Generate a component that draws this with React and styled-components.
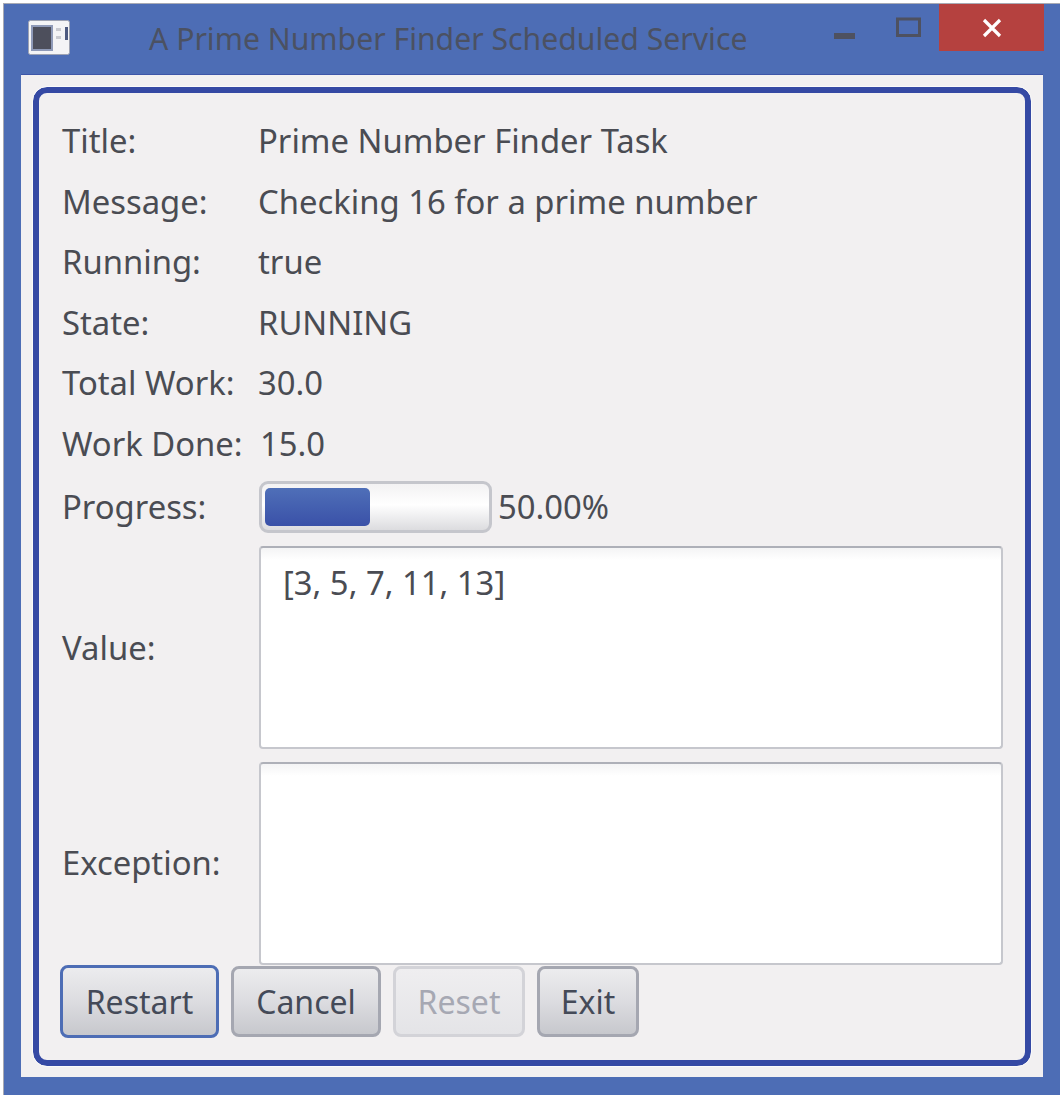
import { Fragment } from "react";
import styled, { createGlobalStyle } from "styled-components";

const GlobalStyle = createGlobalStyle`
  html, body {
    margin: 0;
    padding: 0;
    background: #fff;
  }
  body {
    font-family: "Noto Sans", "Open Sans", sans-serif;
  }
`;

const Page = styled.div`
  width: 1064px;
  height: 1099px;
  padding: 3px 4px 4px 3px;
  box-sizing: border-box;
`;

const Window = styled.div`
  height: 100%;
  box-sizing: border-box;
  display: flex;
  flex-direction: column;
  background: #4d6db5;
  border-top: 1px solid #a8aab4;
  border-left: 1px solid #a8aab4;
  padding: 0 17px 18px 17px;
`;

const TitleBar = styled.div`
  height: 71px;
  flex: none;
  display: flex;
  align-items: flex-start;
`;

const AppIcon = styled.svg`
  flex: none;
  margin: 16px 0 0 7px;
`;

const WindowTitle = styled.div`
  margin: 10px 0 0 78px;
  font-size: 30.2px;
  line-height: 50px;
  color: #4b5162;
  white-space: nowrap;
`;

const Controls = styled.div`
  margin-left: auto;
  margin-right: -1px;
  display: flex;
  align-items: flex-start;
`;

const ControlIcon = styled.svg`
  flex: none;
  margin-top: ${(p) => p.$top}px;
  margin-right: ${(p) => p.$right}px;
`;

const CloseButton = styled.div`
  width: 105px;
  height: 47px;
  background: #b5413f;
  display: flex;
  align-items: center;
  justify-content: center;
`;

const Sheet = styled.div`
  flex: 1;
  box-sizing: border-box;
  background: #f2f0f1;
  box-shadow: 0 -1px 0 #3d56a8;
  padding: 12px 12px 11px 12px;
  display: flex;
`;

const Panel = styled.div`
  flex: 1;
  box-sizing: border-box;
  border: 6px solid #3549a4;
  border-radius: 14px;
  outline: 1px solid #fafafa;
  padding: 24px 22px 0 21px;
  color: #4a4c53;
`;

const Form = styled.div`
  display: grid;
  grid-template-columns: 196px 1fr;
  row-gap: 13px;
  padding-left: 3px;
  align-items: center;
`;

const Label = styled.div`
  font-size: 32.8px;
  line-height: 47.6px;
  white-space: nowrap;
  margin-left: -1px;
  padding-top: ${(p) => p.$drop || 0}px;
`;

const Value = styled(Label)`
  margin-left: ${(p) => p.$shift || -1}px;
`;

const ProgressRow = styled.div`
  display: flex;
  align-items: center;
  gap: 7px;
  height: 52px;
`;

const ProgressTrack = styled.div`
  width: 233px;
  height: 52px;
  box-sizing: border-box;
  border: 3px solid #c5c6cc;
  border-radius: 9px;
  padding: 4px 15px 4px 3px;
  background: linear-gradient(#f3f2f3, #fff 45%, #dcdcdf);
`;

const ProgressFill = styled.div`
  height: 100%;
  border-radius: 5px;
  background: linear-gradient(#4f6fb8, #3a51a8);
`;

const TextBox = styled.div`
  height: 203px;
  box-sizing: border-box;
  border: 2px solid #c6c7cd;
  border-top-color: #aeb0b8;
  border-radius: 4px;
  padding: 13px 22px;
  font-size: 32.8px;
  line-height: 44px;
  background: linear-gradient(#f4f4f5, #fff 12px);
`;

const ButtonRow = styled.div`
  display: flex;
  align-items: center;
  gap: 12px;
`;

const Button = styled.div`
  width: ${(p) => p.$width}px;
  height: ${(p) => (p.$focused ? 73 : 71)}px;
  box-sizing: border-box;
  display: flex;
  align-items: center;
  justify-content: center;
  font-size: 32px;
  border-radius: 8px;
  border: ${(p) => (p.$focused ? "3px solid #4d6db5" : "3px solid #a5a7b1")};
  color: #444a58;
  background: linear-gradient(#ececee, #dcdce0 50%, #c7c8cd);
  ${(p) =>
    p.$disabled &&
    `
    border-color: #d3d3d8;
    color: #a6a8b3;
    background: linear-gradient(#efeef0, #e4e4e7);
  `}
`;

const rows = [
  ["Title:", "Prime Number Finder Task"],
  ["Message:", "Checking 16 for a prime number"],
  ["Running:", "true"],
  ["State:", "RUNNING"],
  ["Total Work:", "30.0"],
  ["Work Done:", "15.0", 1],
];

const App = () => {
  const progress = 0.5;

  return (
    <Page>
      <GlobalStyle />
      <Window>
        <TitleBar>
          <AppIcon width="43" height="36" viewBox="0 0 43 36">
            <rect x="0.5" y="0.5" width="41" height="34" rx="2" fill="#f4f4f6" stroke="#9ea3b3" />
            <rect x="4" y="6" width="20" height="24" fill="#4d4f5c" stroke="#8f9ab8" strokeWidth="2" />
            <rect x="28" y="8" width="5" height="3" fill="#c9cad0" />
            <rect x="28" y="16" width="5" height="3" fill="#c9cad0" />
            <rect x="37" y="7" width="3" height="13" fill="#4d5a80" />
          </AppIcon>
          <WindowTitle>A Prime Number Finder Scheduled Service</WindowTitle>
          <Controls>
            <ControlIcon $top={29} $right={41} width="21" height="6" viewBox="0 0 21 6">
              <rect width="21" height="6" fill="#4e5160" />
            </ControlIcon>
            <ControlIcon $top={13} $right={18} width="25" height="20" viewBox="0 0 25 20">
              <rect x="1.5" y="2" width="22" height="16.5" fill="none" stroke="#4e5160" strokeWidth="3" />
            </ControlIcon>
            <CloseButton>
              <svg width="20" height="20" viewBox="0 0 20 20">
                <path d="M2 2 L18 18 M18 2 L2 18" stroke="#fff" strokeWidth="3.2" />
              </svg>
            </CloseButton>
          </Controls>
        </TitleBar>
        <Sheet>
          <Panel>
            <Form>
              {rows.map(([label, value, shift]) => (
                <Fragment key={label}>
                  <Label>{label}</Label>
                  <Value $shift={shift}>{value}</Value>
                </Fragment>
              ))}
              <Label>Progress:</Label>
              <ProgressRow>
                <ProgressTrack>
                  <ProgressFill style={{ width: `${progress * 100}%` }} />
                </ProgressTrack>
                <Label>50.00%</Label>
              </ProgressRow>
              <Label $drop={2}>Value:</Label>
              <TextBox>[3, 5, 7, 11, 13]</TextBox>
              <Label>Exception:</Label>
              <TextBox />
            </Form>
            <ButtonRow>
              <Button $width={159} $focused>Restart</Button>
              <Button $width={150}>Cancel</Button>
              <Button $width={132} $disabled>Reset</Button>
              <Button $width={102}>Exit</Button>
            </ButtonRow>
          </Panel>
        </Sheet>
      </Window>
    </Page>
  );
};

export default App;
